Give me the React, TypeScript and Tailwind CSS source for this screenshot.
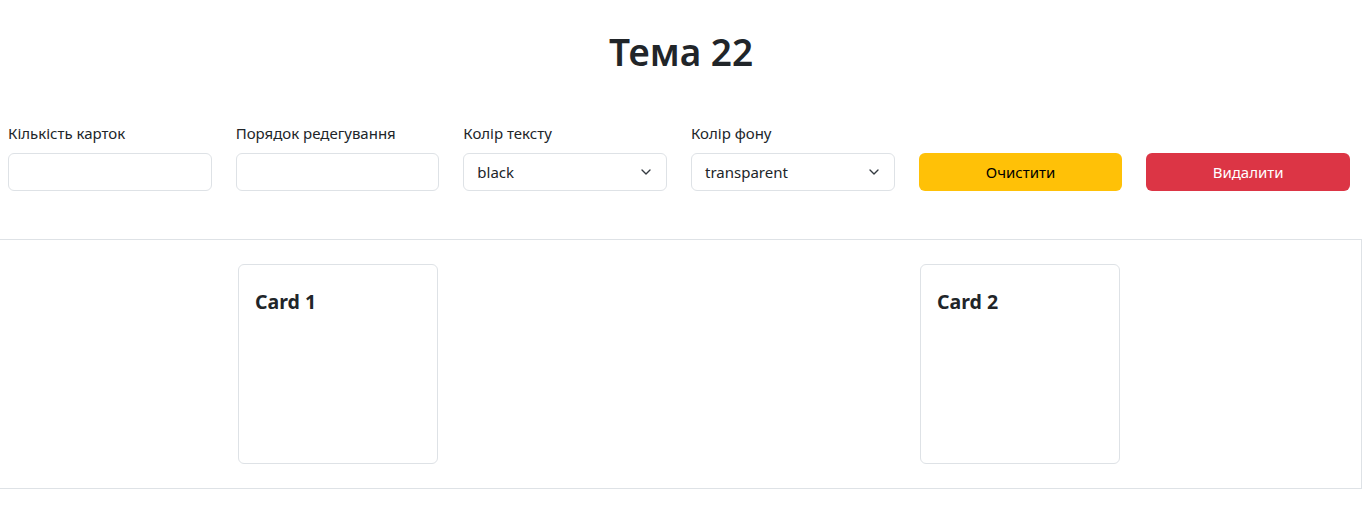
import { ChevronDown } from "lucide-react";

const font = { fontFamily: '"Noto Sans", "Open Sans", sans-serif' };

function Field({ label, children }: { label: string; children: React.ReactNode }) {
  return (
    <div className="flex flex-col">
      <label className="mb-2 text-[15px] leading-6 text-[#212529]">{label}</label>
      {children}
    </div>
  );
}

function SelectBox({ value }: { value: string }) {
  return (
    <div className="flex h-[38px] items-center justify-between rounded-md border border-[#dee2e6] bg-white pl-[13px] pr-[12px] text-[15px] text-[#212529]">
      <span>{value}</span>
      <ChevronDown className="h-4 w-4 text-[#343a40]" strokeWidth={2} />
    </div>
  );
}

function Card({ title }: { title: string }) {
  return (
    <div className="h-[200px] w-[200px] rounded-md border border-[#dee2e6] bg-white p-4">
      <h5 className="mt-[9px] text-[19.5px] font-bold leading-6 text-[#212529]">{title}</h5>
    </div>
  );
}

export default function App() {
  return (
    <div className="min-h-screen overflow-hidden bg-white text-[#212529]" style={font}>
      <h1 className="pt-7 text-center text-[37px] font-semibold leading-[48px]">Тема 22</h1>

      <div className="mt-[45px] grid grid-cols-6 gap-6 pl-2 pr-3">
        <Field label="Кількість карток">
          <div className="h-[38px] rounded-md border border-[#dee2e6] bg-white" />
        </Field>
        <Field label="Порядок редегування">
          <div className="h-[38px] rounded-md border border-[#dee2e6] bg-white" />
        </Field>
        <Field label="Колір тексту">
          <SelectBox value="black" />
        </Field>
        <Field label="Колір фону">
          <SelectBox value="transparent" />
        </Field>
        <div className="flex flex-col justify-end">
          <button className="h-[38px] rounded-md bg-[#ffc107] text-[15px] text-black">Очистити</button>
        </div>
        <div className="flex flex-col justify-end">
          <button className="h-[38px] rounded-md bg-[#dc3545] text-[15px] text-white">Видалити</button>
        </div>
      </div>

      <div className="-ml-1 mt-12 flex h-[250px] w-[calc(100%+4px)] items-center justify-around border border-[#dee2e6]">
        <Card title="Card 1" />
        <Card title="Card 2" />
      </div>
    </div>
  );
}
